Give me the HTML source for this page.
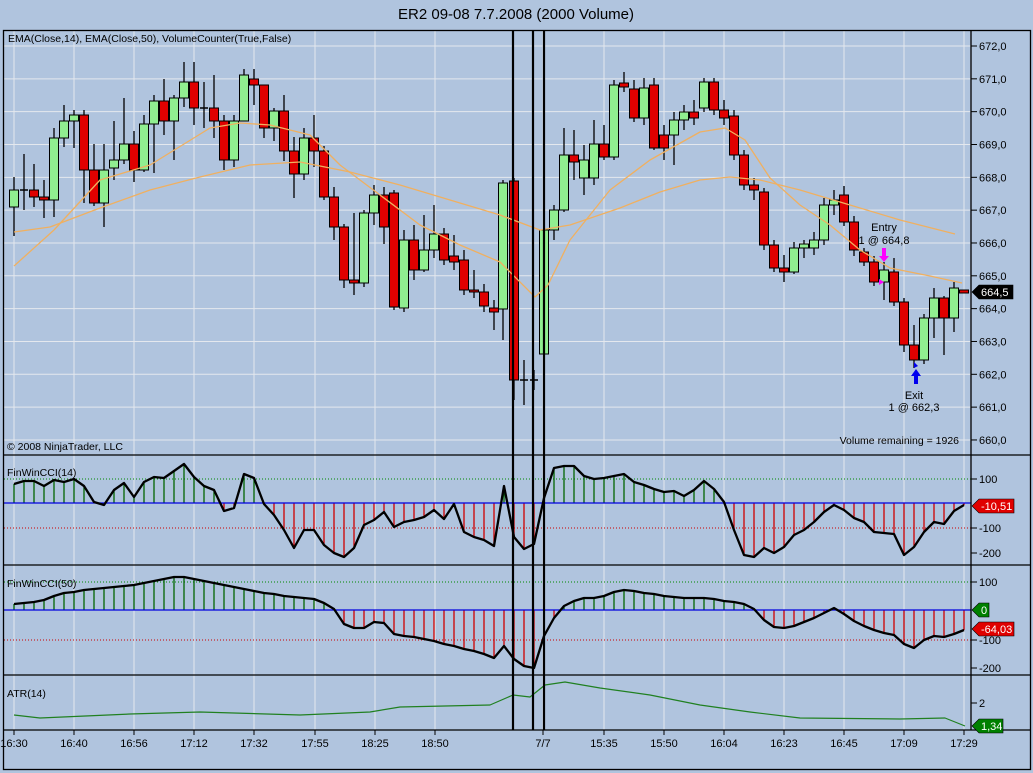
<!DOCTYPE html>
<html><head><meta charset="utf-8"><style>
html,body{margin:0;padding:0;background:#b0c4de;}
svg{display:block;font-family:"Liberation Sans",sans-serif;}
</style></head><body>
<svg id="s" width="1033" height="773" viewBox="0 0 1033 773" xmlns="http://www.w3.org/2000/svg">
<rect width="1033" height="773" fill="#b0c4de"/>
<text x="516" y="19" font-size="15" text-anchor="middle" fill="#000">ER2 09-08  7.7.2008 (2000 Volume)</text>
<g id="g"></g>
</svg>
<script>
var g=document.getElementById('g'),h='';
function L(x1,y1,x2,y2,c,w,d){h+='<line x1="'+x1+'" y1="'+y1+'" x2="'+x2+'" y2="'+y2+'" stroke="'+c+'" stroke-width="'+(w||1)+'"'+(d?' stroke-dasharray="'+d+'"':'')+'/>';}
function T(x,y,t,s,a,c){h+='<text x="'+x+'" y="'+y+'" font-size="'+(s||11)+'" text-anchor="'+(a||'start')+'" fill="'+(c||'#000')+'">'+t+'</text>';}
function P(pts,c,w){h+='<polyline fill="none" stroke="'+c+'" stroke-width="'+w+'" stroke-linejoin="round" points="'+pts.map(function(p){return p.join(',')}).join(' ')+'"/>';}
var TL=[[14,'16:30'],[74,'16:40'],[134,'16:56'],[194,'17:12'],[254,'17:32'],[315,'17:55'],[375,'18:25'],[435,'18:50'],[543,'7/7'],[604,'15:35'],[664,'15:50'],[724,'16:04'],[784,'16:23'],[844,'16:45'],[904,'17:09'],[964,'17:29']];
TL.forEach(function(a){L(a[0],31,a[0],730,'#e4e8ee',1);});
for(var i=0;i<13;i++){var y=46+i*32.83;L(4,y,971,y,'#e4e8ee',1);}
var C=[[14,207,190,177,236],[24,190,190,154,210],[34,190,197,164,207],[44,197,200,180,218],[54,200,138,128,217],[64,138,121,105,147],[74,121,115,110,148],[84,115,170,110,203],[94,170,203,144,206],[104,203,170,144,227],[114,168,160,121,180],[124,160,144,98,164],[134,144,170,131,182],[144,170,124,115,172],[154,124,101,95,173],[164,101,121,79,135],[174,121,98,95,160],[184,98,82,62,107],[194,82,108,62,125],[204,108,108,82,128],[214,108,121,75,138],[224,121,160,115,170],[234,160,121,115,167],[244,121,75,69,121],[254,79,85,69,105],[264,85,128,85,138],[274,128,111,108,141],[284,111,151,95,161],[294,151,174,137,198],[304,174,138,128,180],[314,138,151,115,167],[324,151,197,146,200],[334,197,227,187,240],[344,227,280,224,288],[354,280,283,213,295],[364,283,213,210,287],[374,213,195,185,225],[384,195,227,187,244],[394,193,307,190,310],[404,308,240,230,312],[414,240,270,225,280],[424,270,250,215,272],[434,250,234,205,258],[444,234,260,228,265],[454,256,262,235,270],[464,260,290,250,295],[474,290,292,270,298],[484,292,306,284,312],[494,308,312,300,330],[503,309,183,180,340],[514,181,380,178,400],[524,380,380,360,405],[534,380,380,370,390],[544,354,230,228,356],[554,230,210,205,240],[564,210,155,128,212],[574,155,162,130,180],[584,178,160,145,195],[594,178,144,120,185],[604,144,157,125,160],[614,157,85,80,160],[624,83,87,72,92],[634,89,118,80,122],[644,118,88,78,125],[654,85,148,78,150],[664,135,148,125,160],[674,135,120,112,165],[684,120,112,105,130],[694,112,118,100,125],[704,108,82,78,112],[714,82,110,78,115],[724,110,118,100,125],[734,116,155,110,160],[744,155,185,150,190],[754,185,190,178,200],[764,192,245,188,250],[774,245,268,240,272],[784,268,272,255,282],[794,272,248,242,274],[804,248,244,240,258],[814,248,240,232,255],[824,240,205,198,245],[834,205,200,190,215],[844,195,222,186,226],[854,222,250,216,256],[864,252,262,248,266],[874,262,282,256,286],[884,282,270,262,300],[894,272,302,258,306],[904,302,345,298,352],[914,345,360,325,368],[924,360,318,314,364],[934,318,298,288,338],[944,298,318,296,355],[954,318,288,282,332],[964,290,293,290,293]];
C.forEach(function(b){var x=b[0],up=b[2]<b[1];L(x,b[3],x,b[4],'#000',1.3);var t=Math.min(b[1],b[2]),bt=Math.max(b[1],b[2]);if(bt-t<2){L(x-4,t,x+4,t,'#000',1.5);if(x==964){h+='<rect x="960.5" y="289.5" width="7" height="4" fill="#e00" stroke="#000"/>';}return;}h+='<rect x="'+(x-4.5)+'" y="'+t+'" width="9" height="'+(bt-t)+'" fill="'+(up?'#90ee90':'#e00000')+'" stroke="#000" stroke-width="1"/>';});
P([[14,266],[54,230],[100,180],[150,165],[210,128],[240,123],[270,125],[310,135],[340,165],[380,195],[420,225],[460,245],[500,262],[535,297],[548,285],[570,240],[610,190],[650,160],[700,132],[725,128],[745,140],[770,178],[800,205],[830,225],[860,250],[890,268],[930,276],[962,283]],'#f0b060',1.3);
P([[14,232],[50,227],[100,208],[150,190],[200,177],[250,165],[300,162],[350,172],[400,185],[450,200],[500,215],[540,230],[570,225],[620,208],[660,192],[700,180],[730,177],[760,180],[800,190],[850,205],[900,220],[955,234]],'#f0b060',1.3);
function cci(z,p1,m1,pts){L(4,p1,971,p1,'#080',1,'1,2');L(4,m1,971,m1,'#c00',1,'1,2');
 pts.forEach(function(p){if(p[0]>966)return;var c=p[1]<z?'#006400':'#d00000';L(p[0],z,p[0],p[1],c,1.3);});
 L(4,z,971,z,'#0000e0',1.3);P(pts,'#000',2.3);}
var c14=[[14,484],[24,481],[34,481],[44,486],[54,480],[64,482],[74,479],[84,486],[94,502],[104,505],[114,490],[124,483],[134,497],[144,482],[154,477],[164,478],[174,471],[184,464],[194,477],[204,486],[214,490],[224,511],[234,508],[244,474],[254,478],[264,504],[274,515],[284,530],[294,548],[304,530],[314,530],[324,545],[334,553],[344,557],[354,548],[364,525],[374,520],[384,512],[394,527],[404,522],[414,520],[424,517],[434,510],[444,519],[454,504],[464,532],[474,537],[484,540],[494,546],[504,486],[514,537],[524,549],[534,544],[544,498],[554,468],[564,466],[574,466],[584,476],[594,479],[604,478],[614,476],[624,474],[634,482],[644,485],[654,489],[664,492],[674,491],[684,496],[694,490],[704,481],[714,489],[724,502],[734,530],[744,555],[754,557],[764,548],[774,553],[784,547],[794,535],[804,530],[814,522],[824,512],[834,505],[844,510],[854,518],[864,522],[874,532],[884,533],[894,534],[904,555],[914,547],[924,532],[934,522],[944,524],[954,511],[964,505]];
cci(503,479,528,c14);
var k=[[14,604],[40,602],[60,594],[100,588],[140,584],[180,576],[220,584],[260,592],[300,598],[320,600],[335,610],[345,625],[360,630],[380,618],[395,635],[420,638],[450,645],[470,650],[495,658],[505,645],[515,660],[525,667],[535,668],[545,632],[560,608],[570,603],[582,598],[600,598],[620,590],[640,592],[660,595],[680,598],[700,598],[720,600],[750,605],[770,627],[790,628],[810,620],[835,608],[860,625],[880,632],[895,635],[905,645],[915,648],[930,635],[945,637],[965,630]];
var c50=[];for(var x=14;x<=964;x+=10){for(var j=0;j<k.length-1;j++){if(x>=k[j][0]&&x<=k[j+1][0]){var f=(x-k[j][0])/(k[j+1][0]-k[j][0]);c50.push([x,Math.round(k[j][1]+f*(k[j+1][1]-k[j][1]))]);break;}}}
cci(610,582,640,c50);
P([[14,715],[40,718],[130,714],[200,712],[300,715],[370,712],[400,707],[490,705],[513,695],[530,697],[545,685],[565,682],[600,688],[650,695],[700,705],[750,712],[800,718],[900,719],[945,718],[965,726]],'#208020',1.2);
[513,533,544].forEach(function(x){L(x,31,x,730,'#000',2.2);});
h+='<rect x="3.5" y="30.5" width="1027" height="739" fill="none" stroke="#000" stroke-width="1.3"/>';
[455,565,675].forEach(function(y){L(3,y,1031,y,'#000',1.3);});
L(3,730,1031,730,'#000',1.3);L(971,30,971,730,'#000',1.3);
for(var i=0;i<13;i++){var y=46+i*32.83;L(971,y,977,y,'#000',1);T(979,y+4,(672-i)+',0',11,'start','#000');}
[[479,'100'],[528,'-100'],[553,'-200'],[582,'100'],[640,'-100'],[668,'-200'],[703,'2']].forEach(function(a){L(971,a[0],977,a[0],'#000',1);T(979,a[0]+4,a[1],11);});
function tag(y,t,c,w){h+='<polygon points="972,'+y+' 979,'+(y-7)+' '+(979+w)+','+(y-7)+' '+(979+w)+','+(y+7)+' 979,'+(y+7)+'" fill="'+c+'" stroke="#000" stroke-width="0.6"/>';T(981,y+4,t,11,'start','#fff');}
tag(292,'664,5','#000',34);tag(506,'-10,51','#e00000',35);tag(610,'0','#008000',10);tag(629,'-64,03','#e00000',35);tag(726,'1,34','#008000',24);
TL.forEach(function(a){L(a[0],730,a[0],735,'#000',1);T(a[0],747,a[1],11,'middle');});
T(8,42,'EMA(Close,14), EMA(Close,50), VolumeCounter(True,False)',10.5);
T(7,450,'© 2008 NinjaTrader, LLC',10.5);
T(959,444,'Volume remaining = 1926',10.5,'end');
T(7,476,'FinWinCCI(14)',10.5);T(7,587,'FinWinCCI(50)',10.5);T(7,697,'ATR(14)',10.5);
T(884,231,'Entry',11,'middle');T(884,244,'1 @ 664,8',11,'middle');
T(914,399,'Exit',11,'middle');T(914,411,'1 @ 662,3',11,'middle');
h+='<path d="M882,248 v8 h-3 l5,6 l5,-6 h-3 v-8z" fill="#ff00ff"/><path d="M879,279 l5,3 -5,3z" fill="#ff00ff"/>';
h+='<path d="M914,384 v-8 h-3 l5,-7 l5,7 h-3 v8z" fill="#0000ee"/><path d="M918,366 l-4,-4 v6z" fill="#0000ee"/>';
g.innerHTML=h;
</script>
</body></html>
